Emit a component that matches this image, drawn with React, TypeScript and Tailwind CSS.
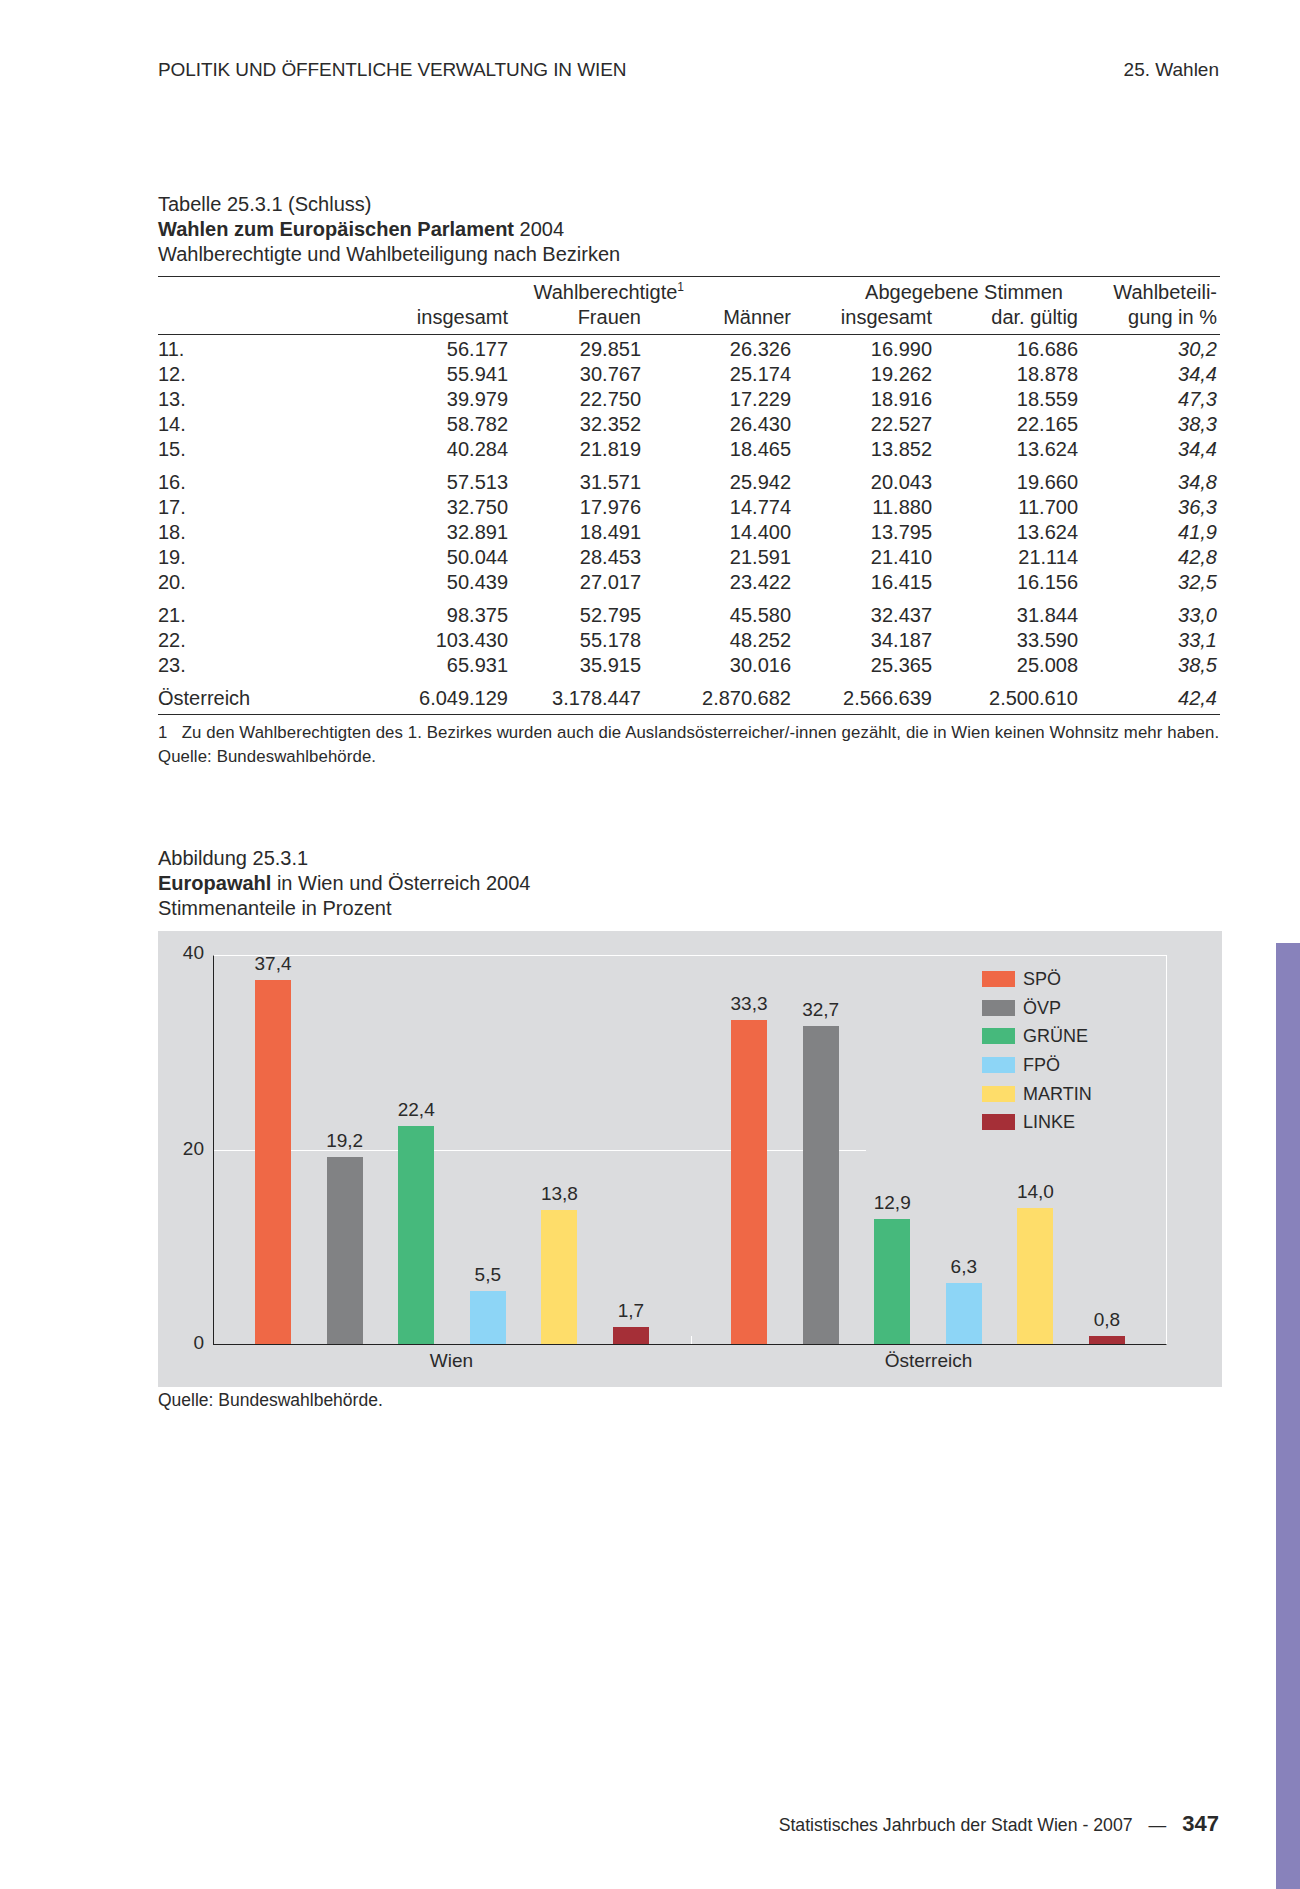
import React from 'react';

type Row = [string, string, string, string, string, string, string];

const groups: Row[][] = [
  [
    ['11.', '56.177', '29.851', '26.326', '16.990', '16.686', '30,2'],
    ['12.', '55.941', '30.767', '25.174', '19.262', '18.878', '34,4'],
    ['13.', '39.979', '22.750', '17.229', '18.916', '18.559', '47,3'],
    ['14.', '58.782', '32.352', '26.430', '22.527', '22.165', '38,3'],
    ['15.', '40.284', '21.819', '18.465', '13.852', '13.624', '34,4'],
  ],
  [
    ['16.', '57.513', '31.571', '25.942', '20.043', '19.660', '34,8'],
    ['17.', '32.750', '17.976', '14.774', '11.880', '11.700', '36,3'],
    ['18.', '32.891', '18.491', '14.400', '13.795', '13.624', '41,9'],
    ['19.', '50.044', '28.453', '21.591', '21.410', '21.114', '42,8'],
    ['20.', '50.439', '27.017', '23.422', '16.415', '16.156', '32,5'],
  ],
  [
    ['21.', '98.375', '52.795', '45.580', '32.437', '31.844', '33,0'],
    ['22.', '103.430', '55.178', '48.252', '34.187', '33.590', '33,1'],
    ['23.', '65.931', '35.915', '30.016', '25.365', '25.008', '38,5'],
  ],
  [['Österreich', '6.049.129', '3.178.447', '2.870.682', '2.566.639', '2.500.610', '42,4']],
];

const parties = [
  { name: 'SPÖ', color: 'bg-[#ef6846]' },
  { name: 'ÖVP', color: 'bg-[#818284]' },
  { name: 'GRÜNE', color: 'bg-[#46b97c]' },
  { name: 'FPÖ', color: 'bg-[#8dd5f6]' },
  { name: 'MARTIN', color: 'bg-[#fedd6a]' },
  { name: 'LINKE', color: 'bg-[#a52f37]' },
];

const chartGroups = [
  { label: 'Wien', values: [37.4, 19.2, 22.4, 5.5, 13.8, 1.7] },
  { label: 'Österreich', values: [33.3, 32.7, 12.9, 6.3, 14.0, 0.8] },
];

// px per percentage point (40 % = plot height)
const SCALE = 9.725;

const gridCols = 'grid grid-cols-[200px_150px_133px_150px_141px_146px_142px]';

const TableRow = ({ row }: { row: Row }) => (
  <div className={`${gridCols} leading-[25px]`}>
    <div>{row[0]}</div>
    <div className="text-right">{row[1]}</div>
    <div className="text-right">{row[2]}</div>
    <div className="text-right">{row[3]}</div>
    <div className="text-right">{row[4]}</div>
    <div className="text-right">{row[5]}</div>
    <div className="text-right italic pr-[3px]">{row[6]}</div>
  </div>
);

const fmt = (v: number) => v.toFixed(1).replace('.', ',');

export default function App() {
  return (
    <div className="relative w-[1300px] h-[1889px] bg-white text-[#2a2a2a] font-['Liberation_Sans',Arial,sans-serif] flex flex-col">
      {/* side tab */}
      <div className="absolute right-0 top-[943px] w-[24px] h-[946px] bg-[#8882bb]" />

      <div className="ml-[158px] w-[1062px] flex flex-col flex-1">
        {/* running head */}
        <div className="flex justify-between pt-[57px] text-[19px] leading-[25px] pr-[1px]">
          <span className="tracking-[-0.1px]">POLITIK UND ÖFFENTLICHE VERWALTUNG IN WIEN</span>
          <span>25. Wahlen</span>
        </div>

        {/* table caption */}
        <div className="mt-[110px] text-[20px] leading-[25px]">
          <div>Tabelle 25.3.1 (Schluss)</div>
          <div>
            <span className="font-bold">Wahlen zum Europäischen Parlament</span> 2004
          </div>
          <div>Wahlberechtigte und Wahlbeteiligung nach Bezirken</div>
        </div>

        {/* table */}
        <div className="mt-[9px] border-t border-b border-[#2a2a2a] text-[20px]">
          <div className="border-b border-[#2a2a2a] pt-[3px] pb-[4px]">
            <div className={`${gridCols} leading-[25px]`}>
              <div />
              <div className="col-span-3 text-right pr-[107px]">
                Wahlberechtigte<span className="align-super text-[12px] leading-none">1</span>
              </div>
              <div className="col-span-2 text-right pr-[15px]">Abgegebene Stimmen</div>
              <div className="text-right pr-[3px]">Wahlbeteili-</div>
            </div>
            <div className={`${gridCols} leading-[25px]`}>
              <div />
              <div className="text-right">insgesamt</div>
              <div className="text-right">Frauen</div>
              <div className="text-right">Männer</div>
              <div className="text-right">insgesamt</div>
              <div className="text-right">dar. gültig</div>
              <div className="text-right pr-[3px]">gung in %</div>
            </div>
          </div>
          <div className="pt-[2px] pb-[3px] flex flex-col gap-[8px]">
            {groups.map((g, i) => (
              <div key={i}>
                {g.map((r) => (
                  <TableRow key={r[0]} row={r} />
                ))}
              </div>
            ))}
          </div>
        </div>

        <div className="mt-[6px] text-[16.8px] leading-[24px] tracking-[0.1px]">
          <div className="whitespace-nowrap">
            1&nbsp;&nbsp; Zu den Wahlberechtigten des 1. Bezirkes wurden auch die Auslandsösterreicher/-innen gezählt, die in Wien keinen Wohnsitz mehr haben.
          </div>
          <div>Quelle: Bundeswahlbehörde.</div>
        </div>

        {/* chart caption */}
        <div className="mt-[77px] text-[20px] leading-[25px]">
          <div>Abbildung 25.3.1</div>
          <div>
            <span className="font-bold">Europawahl</span> in Wien und Österreich 2004
          </div>
          <div>Stimmenanteile in Prozent</div>
        </div>

        {/* chart */}
        <div className="mt-[10px] w-[1064px] h-[456px] bg-[#dbdcde] pt-[24px]">
          <div className="relative ml-[55px] w-[954px] h-[390px] border border-t-white border-r-white border-l-[#222] border-b-[#222] flex items-end">
            {/* y labels */}
            <div className="absolute left-[-42px] w-[32px] top-[-16px] text-right text-[19px] leading-[25px]">40</div>
            <div className="absolute left-[-42px] w-[32px] top-[180px] text-right text-[19px] leading-[25px]">20</div>
            <div className="absolute left-[-42px] w-[32px] top-[374px] text-right text-[19px] leading-[25px]">0</div>
            {/* grid line at 20 */}
            <div className="absolute left-0 top-[194px] w-[652px] h-px bg-white" />
            {/* group separator tick */}
            <div className="absolute left-[477px] bottom-0 w-px h-[8px] bg-white" />

            {chartGroups.map((g) => (
              <div key={g.label} className="relative flex-1 flex items-end justify-center gap-[35.6px]">
                {g.values.map((v, i) => (
                  <div key={i} className="flex flex-col items-center w-[36px]">
                    <span className="text-[19px] leading-[20px] mb-[6px] whitespace-nowrap">{fmt(v)}</span>
                    <div className={`w-[36px] ${parties[i].color}`} style={{ height: v * SCALE }} />
                  </div>
                ))}
              </div>
            ))}

            {/* legend */}
            <div className="absolute left-[768px] top-[9px] flex flex-col">
              {parties.map((p) => (
                <div key={p.name} className="flex items-center h-[28.6px]">
                  <div className={`w-[33px] h-[16px] ${p.color}`} />
                  <span className="ml-[8px] text-[18px] leading-[20px]">{p.name}</span>
                </div>
              ))}
            </div>
          </div>
          <div className="ml-[55px] w-[954px] mt-[3px] flex text-[19px] leading-[25px]">
            {chartGroups.map((g) => (
              <div key={g.label} className="flex-1 text-center">
                {g.label}
              </div>
            ))}
          </div>
        </div>
        <div className="mt-[1px] text-[17.5px] leading-[24px]">Quelle: Bundeswahlbehörde.</div>

        {/* footer */}
        <div className="mt-auto pb-[51px] flex justify-end items-baseline gap-[16px] text-[17.7px] leading-[25px]">
          <span>Statistisches Jahrbuch der Stadt Wien - 2007</span>
          <span>—</span>
          <span className="font-bold text-[22px] pr-[1px]">347</span>
        </div>
      </div>
    </div>
  );
}
